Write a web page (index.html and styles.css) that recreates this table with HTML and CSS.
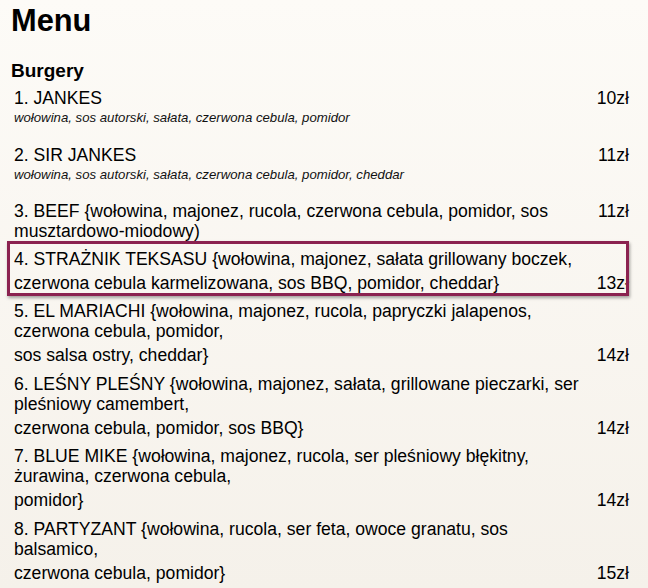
FILE: index.html
```html
<!DOCTYPE html>
<html lang="pl">
<head>
<meta charset="utf-8">
<title>Menu</title>
<link rel="stylesheet" href="styles.css">
</head>
<body>
<main class="menu">
  <h1 class="menu-title">Menu</h1>
  <section class="category">
    <h2 class="category-title">Burgery</h2>
    <ol class="items">
      <li class="item">
        <div class="row"><span class="name">1. JANKES</span><span class="price">10zł</span></div>
        <p class="desc">wołowina, sos autorski, sałata, czerwona cebula, pomidor</p>
      </li>
      <li class="item">
        <div class="row"><span class="name">2. SIR JANKES</span><span class="price">11zł</span></div>
        <p class="desc">wołowina, sos autorski, sałata, czerwona cebula, pomidor, cheddar</p>
      </li>
      <li class="item">
        <div class="row"><span class="name">3. BEEF {wołowina, majonez, rucola, czerwona cebula, pomidor, sos musztardowo-miodowy)</span><span class="price">11zł</span></div>
      </li>
      <li class="item item--highlight">
        <div class="row"><span class="name">4. STRAŻNIK TEKSASU {wołowina, majonez, sałata grillowany boczek,</span></div>
        <div class="row"><span class="name">czerwona cebula karmelizowana, sos BBQ, pomidor, cheddar}</span><span class="price">13zł</span></div>
      </li>
      <li class="item">
        <div class="row"><span class="name">5. EL MARIACHI {wołowina, majonez, rucola, papryczki jalapenos, czerwona cebula, pomidor,</span></div>
        <div class="row"><span class="name">sos salsa ostry, cheddar}</span><span class="price">14zł</span></div>
      </li>
      <li class="item">
        <div class="row"><span class="name">6. LEŚNY PLEŚNY {wołowina, majonez, sałata, grillowane pieczarki, ser pleśniowy camembert,</span></div>
        <div class="row"><span class="name">czerwona cebula, pomidor, sos BBQ}</span><span class="price">14zł</span></div>
      </li>
      <li class="item">
        <div class="row"><span class="name">7. BLUE MIKE {wołowina, majonez, rucola, ser pleśniowy błękitny, żurawina, czerwona cebula,</span></div>
        <div class="row"><span class="name">pomidor}</span><span class="price">14zł</span></div>
      </li>
      <li class="item">
        <div class="row"><span class="name">8. PARTYZANT {wołowina, rucola, ser feta, owoce granatu, sos balsamico,</span></div>
        <div class="row"><span class="name">czerwona cebula, pomidor}</span><span class="price">15zł</span></div>
      </li>
    </ol>
  </section>
</main>
</body>
</html>
```
FILE: styles.css
```css
html, body {
  margin: 0;
  padding: 0;
}
body {
  min-height: 100vh;
  background: linear-gradient(#fdfbf7, #f5f1ea);
  font-family: "Liberation Sans", Arial, Helvetica, sans-serif;
  color: #000;
  overflow: hidden;
}
.menu {
  padding: 3px 19px 0 11px;
}
.menu-title {
  margin: 0;
  font-size: 30.8px;
  line-height: 36px;
  font-weight: bold;
}
.category-title {
  margin: 21px 0 0;
  font-size: 19px;
  line-height: 22px;
  font-weight: bold;
}
.items {
  list-style: none;
  margin: 6px 0 0;
  padding: 0 0 0 3px;
  display: flex;
  flex-direction: column;
  gap: 8px;
}
.item {
  display: flex;
  flex-direction: column;
  gap: 4px;
  position: relative;
}
.item:nth-child(n+6) {
  margin-top: 0.5px;
}
.row {
  display: flex;
  align-items: flex-start;
  font-size: 17.6px;
  line-height: 20px;
}
.name {
  flex: 0 1 575px;
  max-width: 575px;
}
.price {
  margin-left: auto;
  white-space: nowrap;
}
.desc {
  margin: -2px 0 10.5px;
  font-size: 13.2px;
  line-height: 16px;
  font-style: italic;
  color: #111;
}
.item--highlight::after {
  content: "";
  position: absolute;
  top: -8px;
  left: -7px;
  right: 0;
  bottom: -3px;
  border: 3px solid #8b2250;
  box-shadow: 1px 2px 3px rgba(0, 0, 0, 0.35);
  pointer-events: none;
}
```
